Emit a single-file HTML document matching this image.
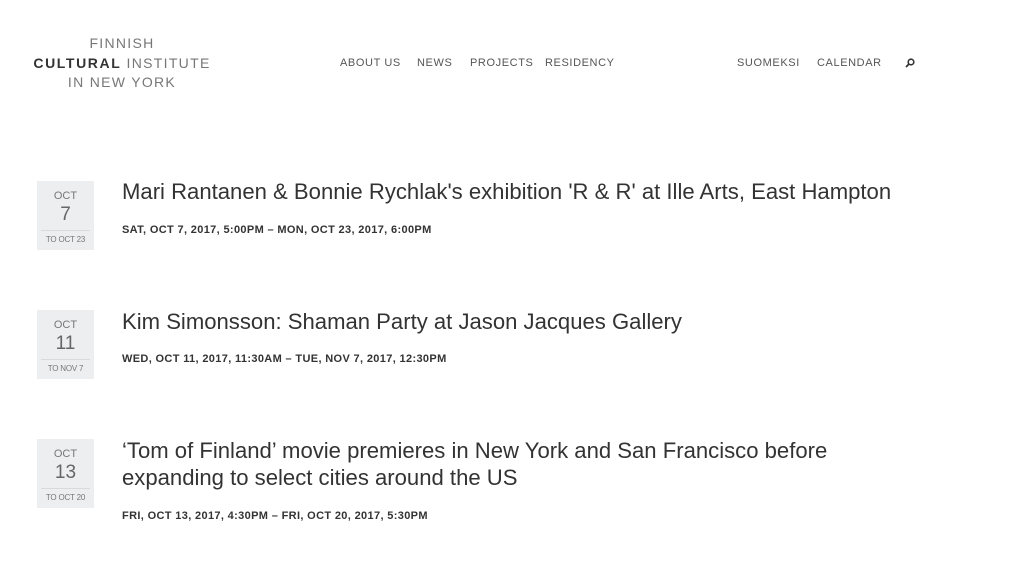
<!DOCTYPE html>
<html><head><meta charset="utf-8"><style>
body{margin:0;width:1010px;height:561px;background:#fff;font-family:"Liberation Sans",sans-serif;position:relative;overflow:hidden;color:#333}
.a{position:absolute;white-space:nowrap}
.logo{font-size:14px;letter-spacing:1.3px;color:#777;text-align:center;width:200px;left:22px;line-height:19.5px;top:34px}
.logo b{color:#333;font-weight:bold;letter-spacing:1.6px}
.nav{font-size:11px;letter-spacing:0.6px;color:#555;top:57px}
.box{position:absolute;left:37px;width:57px;height:69px;background:#eceef0;text-align:center;color:#777}
.box .m{font-size:11px;margin-top:9px}
.box .d{font-size:19px;margin-top:2px;color:#666;font-weight:300}
.box .t{font-size:8px;border-top:1px solid #d8dadc;margin:4px 4px 0;padding-top:4px;letter-spacing:-0.2px}
.ti{left:122px;font-size:22.1px;color:#333;line-height:27px;font-weight:300}
.dt{left:122px;font-size:11px;font-weight:bold;color:#333;letter-spacing:0.35px}
</style></head><body>
<div class="a logo">FINNISH<br><b>CULTURAL</b> INSTITUTE<br>IN NEW YORK</div>
<div class="a nav" style="left:340px">ABOUT US</div>
<div class="a nav" style="left:417px">NEWS</div>
<div class="a nav" style="left:470px">PROJECTS</div>
<div class="a nav" style="left:545px">RESIDENCY</div>
<div class="a nav" style="left:737px">SUOMEKSI</div>
<div class="a nav" style="left:817px">CALENDAR</div>
<svg class="a" style="left:905px;top:58px" width="10" height="10" viewBox="0 0 10 10"><circle cx="6" cy="4" r="2.8" fill="none" stroke="#333" stroke-width="1.6"/><line x1="4" y1="6" x2="1" y2="9" stroke="#333" stroke-width="1.8"/></svg>

<div class="box" style="top:181px"><div class="m">OCT</div><div class="d">7</div><div class="t">TO OCT 23</div></div>
<div class="a ti" style="top:178px">Mari Rantanen &amp; Bonnie Rychlak's exhibition 'R &amp; R' at Ille Arts, East Hampton</div>
<div class="a dt" style="top:224px">SAT, OCT 7, 2017, 5:00PM – MON, OCT 23, 2017, 6:00PM</div>

<div class="box" style="top:310px"><div class="m">OCT</div><div class="d">11</div><div class="t">TO NOV 7</div></div>
<div class="a ti" style="top:308px">Kim Simonsson: Shaman Party at Jason Jacques Gallery</div>
<div class="a dt" style="top:353px">WED, OCT 11, 2017, 11:30AM – TUE, NOV 7, 2017, 12:30PM</div>

<div class="box" style="top:439px"><div class="m">OCT</div><div class="d">13</div><div class="t">TO OCT 20</div></div>
<div class="a ti" style="top:437px">‘Tom of Finland’ movie premieres in New York and San Francisco before<br>expanding to select cities around the US</div>
<div class="a dt" style="top:510px">FRI, OCT 13, 2017, 4:30PM – FRI, OCT 20, 2017, 5:30PM</div>
</body></html>
